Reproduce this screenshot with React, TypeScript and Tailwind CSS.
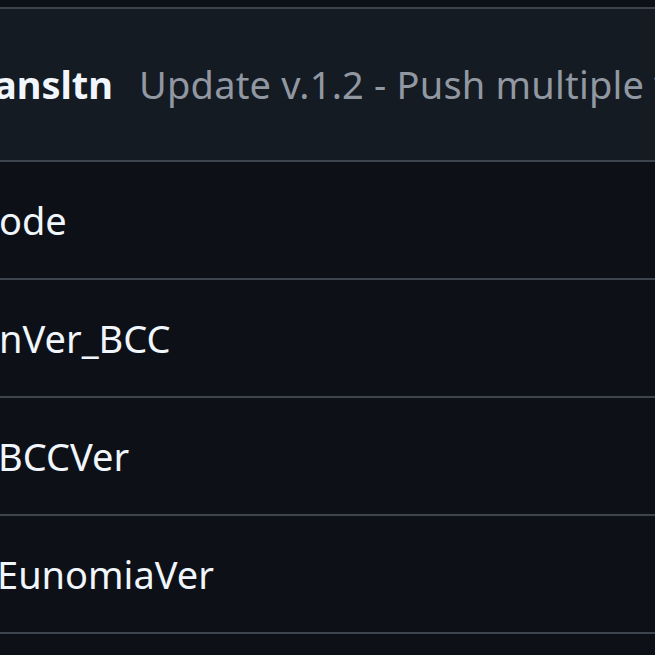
const rows = [
  { name: "ode", shift: "-ml-[1px]" },
  { name: "nVer_BCC", shift: "-ml-[1px]" },
  { name: "BCCVer", shift: "-ml-[2px]" },
  { name: "EunomiaVer", shift: "-ml-[3px]" },
];

export default function App() {
  return (
    <div
      className="w-[655px] h-[655px] overflow-hidden bg-[#0d1117] pt-[7px]"
      style={{ fontFamily: '"Segoe UI", "Noto Sans", "Open Sans", sans-serif' }}
    >
      <div className="border-t-2 border-[#3d444d] bg-[#151b23] h-[153px] flex items-center -ml-[6px] whitespace-nowrap text-[38px]">
        <span className="font-bold text-[#f0f6fc]">ansltn</span>
        <span className="ml-[26px] text-[#9198a1] tracking-[0.2px]">Update v.1.2 - Push multiple versions</span>
      </div>
      {rows.map((r) => (
        <div
          key={r.name}
          className={`border-t-2 border-[#3d444d] h-[118px] flex items-center whitespace-nowrap text-[38px] text-[#f0f6fc] ${r.shift}`}
        >
          {r.name}
        </div>
      ))}
      <div className="border-t-2 border-[#3d444d] h-[40px]" />
    </div>
  );
}
